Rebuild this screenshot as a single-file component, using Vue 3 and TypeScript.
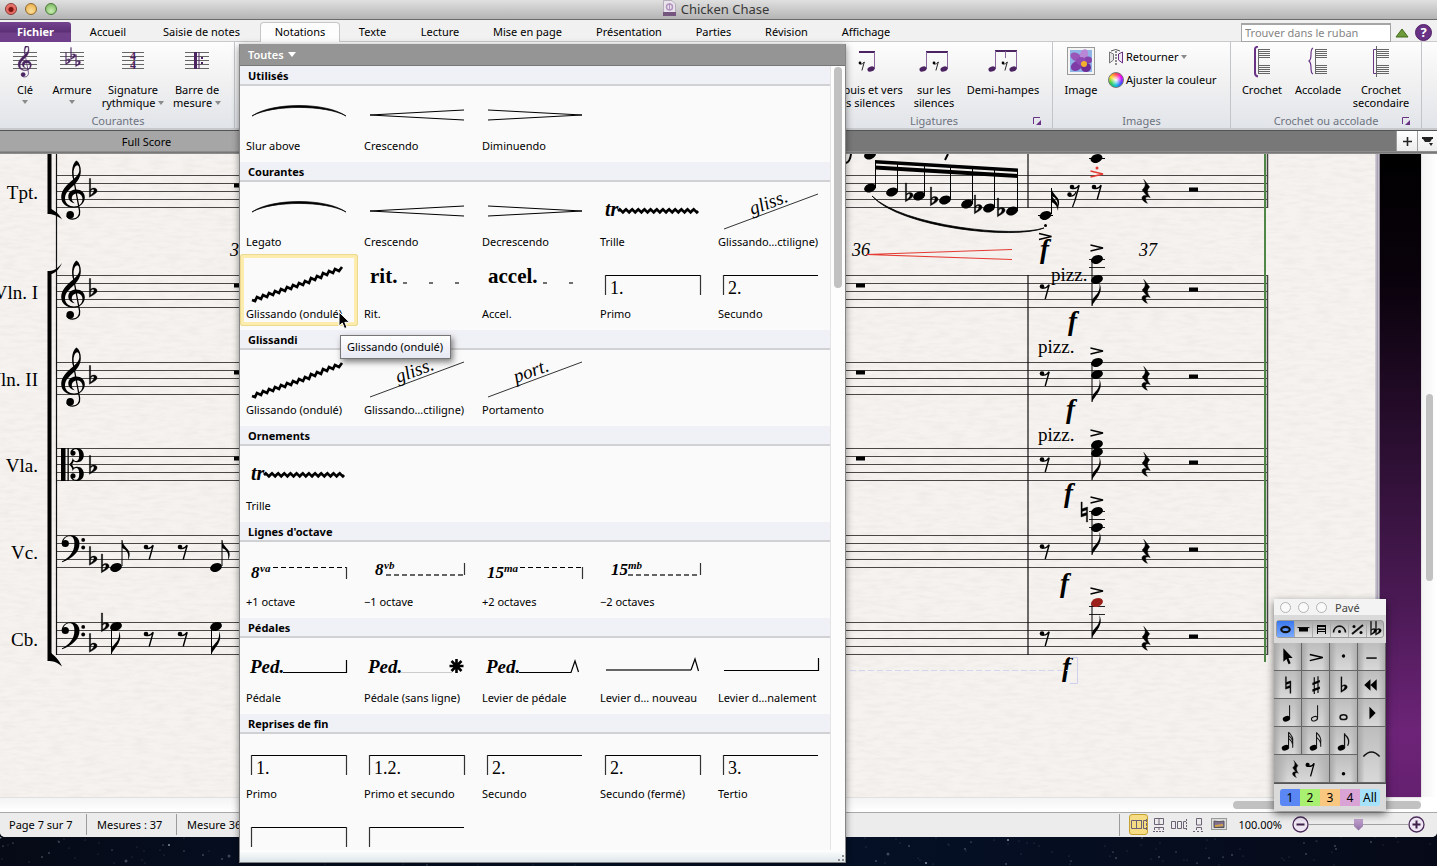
<script setup lang="ts">
import { ref } from 'vue'

interface Stroke { d: string; w?: number; c?: string; dash?: string; fill?: boolean }
interface Glyph { t: string; x: number; y: number; s: number; b?: boolean; i?: boolean; r?: number }
interface Item { label: string; strokes: Stroke[]; glyphs: Glyph[]; on?: boolean }
interface Section { title: string; items: Item[] }

function wave(x: number, y: number, length: number): string {
  let d = `M${x},${y}`
  const count = Math.round(length / 6)
  const step = length / count
  for (let k = 0; k < count; k++) {
    const left = x + k * step
    d += ` L${(left + step * 0.3).toFixed(1)},${y - 1.6} L${(left + step * 0.8).toFixed(1)},${y + 1.4} L${(left + step).toFixed(1)},${y}`
  }
  return d
}

const slur = (label: string): Item => ({
  label, glyphs: [],
  strokes: [{ d: 'M12,30 C32,16 86,16 106,30 C86,18.6 32,18.6 12,30Z', w: 0.7, fill: true }],
})
const cresc = (label: string): Item => ({ label, glyphs: [], strokes: [{ d: 'M106,24 L12,29 L106,34', w: 1 }] })
const dim = (label: string): Item => ({ label, glyphs: [], strokes: [{ d: 'M12,24 L106,29 L12,34', w: 1 }] })
const trill = (): Item => ({
  label: 'Trille',
  strokes: [{ d: wave(24, 29, 80), w: 2.7 }],
  glyphs: [{ t: 'tr', x: 11, y: 34, s: 20, b: true, i: true }],
})
const glissWave = (on = false): Item => ({
  label: 'Glissando (ondulé)', on, glyphs: [],
  strokes: [{ d: 'M12,46 L15,47 L17,43 L21,45 L23,41 L27,43 L29,39 L33,41 L35,37 L39,39 L41,35 L45,37 L47,33 L51,35 L53,31 L57,33 L59,29 L63,31 L65,27 L69,29 L71,24 L75,26 L77,22 L81,24 L83,19 L87,21 L89,17 L93,19 L95,15 L99,17 L102,13', w: 2.7 }],
})
const glissLine = (text: string, label: string): Item => ({
  label,
  strokes: [{ d: 'M12,47 L106,12', w: 1, c: '#333' }],
  glyphs: [{ t: text, x: 40, y: 33, s: 19, i: true, r: -20 }],
})
const volta = (label: string, text: string, closed: boolean): Item => ({
  label,
  strokes: [
    { d: 'M11,21.5 H106', w: 1 },
    { d: closed ? 'M11.5,21 V41 M106.5,21 V41' : 'M11.5,21 V41', w: 1.2, c: '#333' },
  ],
  glyphs: text ? [{ t: text, x: 16, y: 40, s: 18 }] : [],
})
const tempo = (label: string, text: string, dashes: number[]): Item => ({
  label,
  strokes: dashes.map((x) => ({ d: `M${x},29 h4`, w: 1.4, c: '#333' })),
  glyphs: [{ t: text, x: 12, y: 29, s: 21, b: true }],
})
const ottava = (label: string, num: string, sup: string, x: number, line: number, up: boolean): Item => {
  const base = up ? 36 : 33
  return {
    label,
    strokes: up
      ? [{ d: `M${line},25.5 H106`, w: 1.2, dash: '5 3' }, { d: 'M106.5,25 V37', w: 1.2, c: '#333' }]
      : [{ d: `M${line},33 H106`, w: 1.4, dash: '5 3', c: '#333' }, { d: 'M106.5,21 V33', w: 1.2, c: '#333' }],
    glyphs: [
      { t: num, x, y: base, s: 17, b: true, i: true },
      { t: sup, x: x + (num.length > 1 ? 17 : 9), y: base - 6, s: 11, b: true, i: true },
    ],
  }
}
const ped: Glyph = { t: 'Ped.', x: 10, y: 35, s: 19, b: true, i: true }
const asterisk = 'M98.5,21 V35 M91.5,28 H105.5 M93.5,23 L103.5,33 M103.5,23 L93.5,33'

const sections: Section[] = [
  { title: 'Utilisés', items: [slur('Slur above'), cresc('Crescendo'), dim('Diminuendo')] },
  {
    title: 'Courantes',
    items: [
      slur('Legato'), cresc('Crescendo'), dim('Decrescendo'), trill(), glissLine('gliss.', 'Glissando…ctiligne)'),
      glissWave(true), tempo('Rit.', 'rit.', [45, 71, 97]), tempo('Accel.', 'accel.', [67, 93]),
      volta('Primo', '1.', true), volta('Secundo', '2.', false),
    ],
  },
  { title: 'Glissandi', items: [glissWave(), glissLine('gliss.', 'Glissando…ctiligne)'), glissLine('port.', 'Portamento')] },
  { title: 'Ornements', items: [trill()] },
  {
    title: "Lignes d'octave",
    items: [
      ottava('+1 octave', '8', 'va', 11, 33, true), ottava('−1 octave', '8', 'vb', 17, 28, false),
      ottava('+2 octaves', '15', 'ma', 11, 44, true), ottava('−2 octaves', '15', 'mb', 17, 34, false),
    ],
  },
  {
    title: 'Pédales',
    items: [
      { label: 'Pédale', strokes: [{ d: 'M43,34.5 H106.5 V22', w: 1.2 }], glyphs: [ped] },
      { label: 'Pédale (sans ligne)', strokes: [{ d: 'M43,34.5 H94', w: 1, c: '#ccc' }, { d: asterisk, w: 2.6 }], glyphs: [ped] },
      { label: 'Levier de pédale', strokes: [{ d: 'M43,34.5 H95 L99,23 L102.5,34', w: 1.2 }], glyphs: [ped] },
      { label: 'Levier d… nouveau', strokes: [{ d: 'M12,32 H97', w: 1.4, c: '#333' }, { d: 'M97,32 L101,21 L104.5,33', w: 1.2 }], glyphs: [] },
      { label: 'Levier d…nalement', strokes: [{ d: 'M12,32.5 H106.5 V20', w: 1.2 }], glyphs: [] },
    ],
  },
  {
    title: 'Reprises de fin',
    items: [
      volta('Primo', '1.', true), volta('Primo et secundo', '1.2.', true), volta('Secundo', '2.', false),
      volta('Secundo (fermé)', '2.', true), volta('Tertio', '3.', false), volta('', '', true), volta('', '', false),
    ],
  },
]

const tabs = ['Fichier', 'Accueil', 'Saisie de notes', 'Notations', 'Texte', 'Lecture', 'Mise en page', 'Présentation', 'Parties', 'Révision', 'Affichage']

const staves = [175.5, 275.5, 362.5, 448.5, 535.5, 622.5]
const staffLines = staves.flatMap((top) => [0, 8, 16, 24, 32].map((o) => top + o))
const parts = [
  { name: 'Tpt.', y: 199 }, { name: 'Vln. I', y: 299 }, { name: 'Vln. II', y: 386 },
  { name: 'Vla.', y: 472 }, { name: 'Vc.', y: 559 }, { name: 'Cb.', y: 646 },
]
const run = [
  { x: 870, y: 188, flat: 0 }, { x: 892, y: 192, flat: 0 }, { x: 919, y: 196, flat: 906 },
  { x: 945, y: 200, flat: 931 }, { x: 967, y: 204, flat: 0 }, { x: 989, y: 208, flat: 975 },
  { x: 1012, y: 211, flat: 998 },
]
const chords = [
  { notes: [259.5, 279.5], ledgers: [259.5, 267.5], foot: 306, accent: 248 },
  { notes: [362.5, 374.5], ledgers: [], foot: 402, accent: 351 },
  { notes: [444.5, 452.5], ledgers: [], foot: 480, accent: 433 },
  { notes: [511.5, 527.5], ledgers: [511.5, 519.5, 527.5], foot: 555, accent: 500 },
  { notes: [602.5], ledgers: [606.5, 614.5], foot: 638, accent: 591, red: true },
]
const fortes = [[1040, 258], [1068, 330], [1066, 418], [1064, 502], [1060, 592], [1062, 676]]
const pizz = [[1051, 281], [1038, 353], [1038, 441]]

const stars = Array.from({ length: 190 }, (_, k) => ({
  x: (k * 761 + ((k * k * 13) % 97)) % 1437,
  y: (k * 17 + ((k * k * 7) % 23)) % 29,
  r: k % 19 === 0 ? 1.5 : k % 5 === 0 ? 1 : 0.6,
  o: k % 7 === 0 ? 0.7 : 0.3,
}))

const query = ref('')
const zoom = ref(50)
</script>

<template>
  <div class="desktop">
    <svg class="defs" width="0" height="0" aria-hidden="true">
      <defs>
        <g id="treble">
          <path d="M15.5,-39 C18.4,-37 20,-33 19.8,-28 C19.5,-22 16.5,-18 13,-14.6 C8,-10 4,-6.5 4,-1 C4,4 8.5,7 13,7 C18.5,7 21.5,3.5 21.5,-.5 C21.5,-4 19,-6 16,-6 C12.5,-6 10.8,-3.5 10.8,-1 C10.8,1 12,2.5 13.8,3.7 C10,3.2 7.3,.5 7.3,-3 C7.3,-7.5 11,-10 15,-10 C20.5,-10 23.8,-6.5 23.8,-2 C23.8,4 18.5,8.2 12.5,8.2 C5.5,8.2 .2,4 .2,-2.5 C.2,-9 5,-13.5 9.2,-17.5 C13,-21 18,-24.5 18.3,-28.8 C18.5,-32 17.7,-34.2 16.4,-34.2 C14,-34.2 12.6,-30 12.6,-26.5 L12.9,-22 L11.6,-22 C10.4,-29 11.4,-36 15.5,-39Z" />
          <path d="M12.2,-23 L18.6,11.5 C19.2,16.5 16,19.6 11.8,19.6 C8.5,19.6 6.3,18 5.8,16" fill="none" stroke="currentColor" stroke-width="1.3" />
          <circle cx="9.2" cy="15.2" r="3.8" />
        </g>
        <g id="bass">
          <path d="M.8,0 C.6,-5 5,-8.3 9.7,-8.3 C15,-8.3 18.5,-4.8 18.5,0 C18.5,9 11,15 1.2,18.8 L.8,17.9 C8,14 13.4,9 13.4,0 C13.4,-4.5 12,-7.2 8.5,-7.2 C5,-7.2 2.5,-4.5 2,-1Z" />
          <circle cx="4.3" cy="0" r="3.6" /><circle cx="22.2" cy="-3.6" r="1.9" /><circle cx="22.2" cy="4" r="1.9" />
        </g>
        <g id="alto">
          <path d="M0,-16.5 H4.5 V16.5 H0Z M6.5,-16.5 H7.8 V16.5 H6.5Z" />
          <path id="ear" d="M8,0 C10.5,-2 11.4,-4 11.6,-6.5 C12.5,-4.2 14,-3.2 15.5,-3.4 C17.4,-3.6 18.2,-6 18.2,-9 C18.2,-13 17.2,-15.3 14.8,-15.3 C13.2,-15.3 12.2,-14.6 12,-13.8 C14,-13.8 14.6,-12.4 14.6,-11.4 C14.6,-9.8 13.4,-8.8 12,-8.8 C10.2,-8.8 9.4,-10.2 9.4,-11.6 C9.4,-14.6 12.2,-16.5 15.6,-16.5 C20,-16.5 22.8,-13.4 22.8,-9.2 C22.8,-5 20,-2.2 16.4,-2.2 C15,-2.2 13.6,-2.5 12.8,-3.2 L11,0Z" />
          <use href="#ear" transform="scale(1,-1)" />
        </g>
        <g id="flat">
          <path d="M-.6,-13 H.6 V-2 C3,-4.4 7.4,-3.6 7,-.4 C6.6,2.4 2.6,3.6 -.6,5.8Z M.6,-.4 V3.6 C2.4,2.4 4,.8 4,-1 C4,-2.8 1.8,-2.4 .6,-.4Z" fill-rule="evenodd" stroke="currentColor" stroke-width=".4" />
        </g>
        <path id="natural" d="M0,-10 H1.2 V-3.2 L6.6,-5 V10 H5.4 V3.2 L0,5Z M1.2,-.6 V2 L5.4,.6 V-2Z" fill-rule="evenodd" stroke="currentColor" stroke-width=".4" />
        <path id="sharp" d="M1.4,-9 h1.2 v18 h-1.2z M5.4,-10 h1.2 v18 h-1.2z M0,-3 L8,-6 V-3.4 L0,-.4Z M0,4 L8,1 V3.6 L0,6.6Z" />
        <ellipse id="head" rx="6.1" ry="4.2" transform="rotate(-20)" />
        <g id="rest8">
          <circle r="2.3" /><path d="M0,1.4 C3.5,2.4 5.6,.6 7.2,-1.8 L3.2,12.5" fill="none" stroke="currentColor" stroke-width="1.4" />
        </g>
        <path id="rest4" d="M-2.2,-12 L3.6,-4.6 C.4,-1.4 1,1.6 4.2,6 C1.4,4.6 -.6,5.4 -.4,7.6 C-.3,9.4 .4,10.6 1.4,11.8 C-2.4,10.4 -5,7.4 -3.6,5.2 C-2.8,3.8 -.8,3.6 .8,4.2 L-3.8,-1.6 C-.4,-4.6 .2,-7.8 -2.2,-12Z" stroke="currentColor" stroke-width=".5" />
        <path id="flagDown" d="M0,0 V-5 C2,-11 9,-12 7.4,-23 C11.6,-13 5,-9 0,0Z" />
        <path id="flagUp" d="M0,0 C1,7 8.4,9 7.6,15 C7.4,17.4 7,18.6 6,20 C7.2,13 4.4,9.6 0,8Z" />
        <path id="accent" d="M-6.5,-3 L6,0 L-6.5,3" fill="none" stroke="currentColor" stroke-width="1.4" />
      </defs>
    </svg>

    <main class="window">
      <header class="titlebar">
        <div class="lights"><button class="light red" aria-label="Fermer"></button><button class="light yellow" aria-label="Réduire"></button><button class="light green" aria-label="Agrandir"></button></div>
        <h1><svg width="13" height="16" viewBox="0 0 13 16"><path d="M.5,.5 H9 L12.5,4 V15.5 H.5Z" fill="#e9e4ec" stroke="#b5adb9" /><circle cx="6.5" cy="7" r="3" fill="none" stroke="#b293c0" stroke-width="1.5" /><path d="M6.5,3 V10" stroke="#b293c0" /><rect y="12" width="13" height="4" fill="#75567f" /></svg>Chicken Chase</h1>
      </header>

      <nav class="tabs">
        <button v-for="t in tabs" :key="t" class="tab" :class="{ file: t === 'Fichier', current: t === 'Notations' }">{{ t }}</button>
        <span></span>
        <div class="finder">
          <input v-model="query" type="text" placeholder="Trouver dans le ruban" aria-label="Trouver dans le ruban" />
          <button class="plain" aria-label="Réduire le ruban"><svg width="14" height="10"><path d="M7,1 L13,9 H1Z" fill="#6f9a3a" stroke="#3f6a1a" /></svg></button>
          <button class="plain" aria-label="Aide"><svg width="17" height="17"><circle cx="8.500" cy="8.500" r="8" fill="#6a3285" stroke="#512069" /><text x="8.500" y="13" text-anchor="middle" class="helpmark">?</text></svg></button>
        </div>
      </nav>

      <section class="ribbon">
        <div class="group common">
          <div class="tools">
            <button class="tool w46"><svg width="26" height="36"><path d="M1,6.500 H25 M1,10.500 H25 M1,14.500 H25 M1,18.500 H25 M1,22.500 H25" class="rule" /><use href="#treble" class="ink heavy" transform="translate(6,20) scale(.56)" /></svg><span>Clé</span><i class="arrow"></i></button>
            <button class="tool w48"><svg width="26" height="36"><path d="M1,6.500 H25 M1,10.500 H25 M1,14.500 H25 M1,18.500 H25 M1,22.500 H25" class="rule" /><g class="ink heavy"><use href="#flat" transform="translate(7,15) scale(.65)" /><use href="#flat" transform="translate(12,10) scale(.65)" /><use href="#flat" transform="translate(17,17) scale(.65)" /></g></svg><span>Armure</span><i class="arrow"></i></button>
            <button class="tool w74"><svg width="26" height="36"><path d="M2,6.500 H24 M2,10.500 H24 M2,14.500 H24 M2,18.500 H24 M2,22.500 H24" class="rule" /><text x="13" y="14" text-anchor="middle" class="meter">4</text><text x="13" y="23" text-anchor="middle" class="meter">4</text></svg><span>Signature<br />rythmique <i class="arrow inline"></i></span></button>
            <button class="tool w54"><svg width="26" height="36"><path d="M1,6.500 H25 M1,10.500 H25 M1,14.500 H25 M1,18.500 H25 M1,22.500 H25" class="rule" /><path d="M10,6 h3 v17 h-3z M14.500,6 h1 v17 h-1z M17,11 h2 v2 h-2z M17,16 h2 v2 h-2z" class="ink" /></svg><span>Barre de<br />mesure <i class="arrow inline"></i></span></button>
          </div>
          <footer>Courantes</footer>
        </div>
        <div></div>
        <div class="group beams">
          <div class="tools">
            <button class="tool w68"><svg width="36" height="36"><path d="M11,5 H27 V7 H11Z" class="ink" /><path d="M26.500,6 V23" class="stem" /><use href="#head" class="ink" transform="translate(23,23) scale(.6)" /><use href="#rest8" transform="translate(12,17) scale(.6)" /></svg><span>Depuis et vers<br />les silences</span></button>
            <button class="tool w68"><svg width="36" height="36"><path d="M10,5 H32 V7 H10Z" class="ink" /><path d="M10.500,6 V23 M31.500,6 V23" class="stem" /><use href="#head" class="ink" transform="translate(7,23) scale(.6)" /><use href="#head" class="ink" transform="translate(28,23) scale(.6)" /><use href="#rest8" transform="translate(18,17) scale(.6)" /></svg><span>sur les<br />silences</span></button>
            <button class="tool w70"><svg width="36" height="36"><path d="M10,4 H32 V6 H10Z" class="ink" /><path d="M10.500,5 V23 M31.500,5 V23 M20.500,5 V12" class="stem" /><use href="#head" class="ink" transform="translate(7,23) scale(.6)" /><use href="#head" class="ink" transform="translate(28,23) scale(.6)" /><use href="#rest8" transform="translate(18,17) scale(.6)" /></svg><span>Demi-hampes</span></button>
          </div>
          <footer>Ligatures<button class="launcher" aria-label="Options de ligatures"><svg width="8" height="8"><path d="M.5,7 V.5 H7" fill="none" stroke="#6a3285" /><path d="M8,3 V8 H3Z" fill="#6a3285" /></svg></button></footer>
        </div>
        <div class="group images">
          <div class="tools">
            <button class="tool w56"><svg width="28" height="36"><rect x=".5" y="1.500" width="27" height="27" fill="#f4f4f4" stroke="#9a9a9a" /><rect x="3" y="4" width="22" height="22" fill="#8fb4e6" /><g fill="#9a55b8"><ellipse cx="9" cy="11" rx="6" ry="4" transform="rotate(30 9 11)" /><ellipse cx="17" cy="8.500" rx="4" ry="5.500" transform="rotate(20 17 8.500)" fill="#b887d6" /><ellipse cx="21" cy="14" rx="4" ry="3.500" fill="#8741ab" /><ellipse cx="9.500" cy="20" rx="6" ry="4.500" transform="rotate(-30 9.500 20)" fill="#7f3ca6" /><ellipse cx="19" cy="21.500" rx="5" ry="4.500" fill="#6d2b95" /><ellipse cx="14" cy="15" rx="5" ry="4" fill="#8f4bb3" /></g><circle cx="17" cy="18" r="3" fill="#f3b02c" /></svg><span>Image</span></button>
            <div class="stack">
              <button class="row"><svg width="16" height="16"><path d="M1.500,3 L5.500,5 V11 L1.500,14Z" fill="#e3e3e3" stroke="#777" /><path d="M14.500,3 L10.500,5 V11 L14.500,14Z" fill="#f1e8f5" stroke="#6a3285" /><path d="M8,2 V16" stroke="#222" stroke-dasharray="2 1" /><path d="M3,2 Q8,-1 12,2" fill="none" stroke="#555" /></svg><span>Retourner</span><i class="arrow"></i></button>
              <button class="row"><i class="wheel"></i><span>Ajuster la couleur</span></button>
            </div>
          </div>
          <footer>Images</footer>
        </div>
        <div class="group brackets">
          <div class="tools">
            <button class="tool w62"><svg width="20" height="36"><path d="M6,3.500 H18 M6,5.500 H18 M6,7.500 H18 M6,9.500 H18 M6,11.500 H18 M6,19.500 H18 M6,21.500 H18 M6,23.500 H18 M6,25.500 H18 M6,27.500 H18 M6.500,3 V28" class="rule" /><path d="M6,.500 Q3,1 3,3 V27 Q3,30 6,30.500" fill="none" stroke="#6a3285" stroke-width="2" /></svg><span>Crochet</span></button>
            <button class="tool w50"><svg width="20" height="36"><path d="M8,3.500 H19 M8,5.500 H19 M8,7.500 H19 M8,9.500 H19 M8,11.500 H19 M8,19.500 H19 M8,21.500 H19 M8,23.500 H19 M8,25.500 H19 M8,27.500 H19 M7.500,3 V28" class="rule" /><path d="M5,2 C1,4 5,12 1,15 C5,18 1,26 5,28" fill="none" stroke="#6a3285" stroke-width="1.200" /></svg><span>Accolade</span></button>
            <button class="tool w76"><svg width="20" height="36"><path d="M6,3.500 H18 M6,5.500 H18 M6,7.500 H18 M6,9.500 H18 M6,11.500 H18 M6,19.500 H18 M6,21.500 H18 M6,23.500 H18 M6,25.500 H18 M6,27.500 H18 M5.500,0 V31" class="rule" /><path d="M5,3.500 H2.500 V27.500 H5" fill="none" stroke="#6a3285" /></svg><span>Crochet<br />secondaire</span></button>
          </div>
          <footer>Crochet ou accolade<button class="launcher" aria-label="Options de crochets"><svg width="8" height="8"><path d="M.5,7 V.5 H7" fill="none" stroke="#6a3285" /><path d="M8,3 V8 H3Z" fill="#6a3285" /></svg></button></footer>
        </div>
        <div></div>
      </section>

      <div class="docbar">
        <button class="doc">Full Score</button>
        <span></span>
        <button class="docbtn" aria-label="Nouvel onglet"><svg width="9" height="9"><path d="M4.500,0 V9 M0,4.500 H9" stroke="#222" stroke-width="1.600" /></svg></button>
        <button class="docbtn" aria-label="Liste des onglets"><svg width="11" height="9"><path d="M0,0 H11 V2 H10 L8,5 H3 L1,2 H0Z M7,6 H11 L9,9Z" fill="#222" /></svg></button>
      </div>

      <div class="workspace">
        <div class="canvas">
          <svg class="paper">
            <defs>
              <filter id="grain" x="0" y="0" width="100%" height="100%">
                <feTurbulence type="fractalNoise" baseFrequency="0.06 0.28" numOctaves="3" seed="4" />
                <feColorMatrix values="0 0 0 0 .5  0 0 0 0 .42  0 0 0 0 .38  0 0 0 .7 -.27" />
              </filter>
            </defs>
            <rect width="100%" height="100%" fill="#f5f2ef" />
            <rect width="100%" height="100%" filter="url(#grain)" opacity=".3" />
            <g transform="translate(0,-154)">
              <path :d="staffLines.map((y) => `M56,${y} H1268`).join(' ')" stroke="#4a4846" fill="none" />
              <path d="M56.500,154 V655 M1028,154 V208 M1028,275 V655" stroke="#111" stroke-width="1.200" fill="none" />
              <path d="M1267.500,154 V208 M1267.500,275 V655" stroke="#444" stroke-width="1.500" />
              <path d="M1265,154 V662" stroke="#4f8748" stroke-width="2" />
              <path d="M47.500,154 H51.500 V209 C54,211 59,213 62,219.500 C57,215.500 53,214 47.500,214Z" />
              <path d="M47.500,277 V271 C53,271 57,269.500 62,263 C59,270 54,273.500 51.500,274 V653 C54,656 59,659 62,666.500 C57,662 53,661 47.500,661Z" />
              <text v-for="p in parts" :key="p.name" class="part" x="38" :y="p.y" text-anchor="end">{{ p.name }}</text>

              <use v-for="y in [199.5, 299.5, 386.5]" :key="y" href="#treble" x="61" :y="y" />
              <use href="#alto" x="61" y="464.500" />
              <use href="#bass" x="61" y="543.500" /><use href="#bass" x="61" y="630.500" />
              <use v-for="y in [191.5, 291.5, 378.5, 468.5, 559.5, 646.5]" :key="'k' + y" href="#flat" x="90" :y="y" />

              <g v-for="x in [116, 216]" :key="x">
                <use href="#head" :x="x" y="567.500" /><path :d="`M${x + 6},566 V540`" stroke="#000" /><use href="#flagUp" :x="x + 6" y="540" />
                <use href="#head" :x="x" y="626.500" /><path :d="`M${x - 4.5},627 V654`" stroke="#000" /><use href="#flagDown" :x="x - 4.5" y="654" />
              </g>
              <use href="#flat" x="102" y="567" /><use href="#flat" x="102" y="626" />
              <use v-for="x in [146, 180]" :key="'r' + x" href="#rest8" :x="x" y="547" />
              <use v-for="x in [146, 180]" :key="'s' + x" href="#rest8" :x="x" y="634" />
              <rect v-for="y in staves.slice(0, 4)" :key="'w' + y" x="234" :y="y + 8" width="9" height="4" />
              <rect v-for="y in staves.slice(1, 4)" :key="'v' + y" x="856" :y="y + 8" width="9" height="4" />
              <rect v-for="y in staves" :key="'h' + y" x="1189" :y="y + 12" width="9" height="4" />
              <use v-for="y in staves" :key="'q' + y" href="#rest4" x="1146" :y="y + 16" />
              <use v-for="y in staves.slice(1)" :key="'e' + y" href="#rest8" x="1042" :y="y + 11" />

              <text class="barno" x="230" y="256">35</text><text class="barno" x="852" y="256">36</text><text class="barno" x="1139" y="256">37</text>

              <path d="M875,160 L1018,168.500 V172 L875,163.500Z M875,165.500 L1018,174 V178 L875,169.500Z" />
              <g v-for="(n, k) in run" :key="'n' + k">
                <use href="#head" :x="n.x" :y="n.y" /><path :d="`M${n.x + 5.5},${n.y} V${161 + k * 1.4}`" stroke="#000" />
                <use v-if="n.flat" href="#flat" :x="n.flat" :y="n.y" />
              </g>
              <path d="M872,196 C900,228 1014,240 1044,228 C1014,238 902,226 872,196Z" stroke="#000" stroke-width=".8" />
              <use href="#head" x="870" y="155" /><path d="M948,154 L945,160 M846,163 Q850,162 851,154" stroke="#000" stroke-width="2" fill="none" />
              <use href="#head" x="1045.500" y="215.500" /><path d="M1038,215.500 H1053 M1051.500,214 V188" stroke="#000" />
              <use href="#flagUp" x="1051.500" y="188" /><path d="M1051.500,194 C1053,201 1060,201 1058,211 C1057,205 1054,203 1051.500,202Z" />
              <circle cx="1045.500" cy="225.500" r="1.500" /><use href="#accent" x="1045.500" y="236.500" />
              <use href="#rest8" x="1072" y="187" /><circle cx="1069.500" cy="194.500" r="2.200" /><path d="M1069,196 Q1074,197 1076,192 M1075.500,199 L1072.500,207" stroke="#000" stroke-width="1.200" fill="none" />
              <use href="#head" x="1096.500" y="158.500" /><path d="M1089,158.500 H1105" stroke="#000" />
              <g class="redmark"><circle cx="1097" cy="168" r="1.500" /><use href="#accent" x="1097" y="174" /></g>
              <use href="#rest8" x="1094" y="187" />
              <path d="M1012,249.500 L866,254.500 L1012,259.500" fill="none" stroke="#e43a32" stroke-width="1.200" />

              <g v-for="(c, k) in chords" :key="'c' + k">
                <path v-for="l in c.ledgers" :key="l" :d="`M1089,${l} H1105`" stroke="#222" />
                <path :d="`M1092,${c.notes[0]} V${c.foot}`" stroke="#000" />
                <use v-for="n in c.notes" :key="n" href="#head" x="1097" :y="n" :class="{ wrong: c.red }" />
                <use href="#flagDown" x="1092" :y="c.foot" /><use href="#accent" x="1097" :y="c.accent" />
              </g>
              <use href="#natural" x="1081" y="512" />
              <text v-for="f in fortes" :key="f[1]" class="forte" :x="f[0]" :y="f[1]">f</text>
              <text v-for="p in pizz" :key="p[1]" class="part" :x="p[0]" :y="p[1]">pizz.</text>
              <path d="M850,670.500 H1068" stroke="#d5d6ee" stroke-dasharray="6 3" /><path d="M1070,683.500 H1077.500 V657.500 H1070" stroke="#cfd0ec" fill="none" />
            </g>
          </svg>
          <div class="edge"></div>
          <div class="backdrop"></div>
        </div>
        <div class="vscroll"><i></i></div>
        <div class="hscroll"><i></i></div>
        <div class="corner"></div>
      </div>

      <footer class="status">
        <span class="info">Page 7 sur 7</span><span class="info">Mesures : 37</span><span class="info">Mesure 36</span>
        <span class="spacer"></span>
        <div class="views">
          <button class="view on" aria-label="Panorama"><svg width="16" height="12"><path d="M.5,1.500 H11 M.5,9.500 H11 M.5,1.500 V9.500 M5.500,1.500 V9.500 M10.500,1.500 V9.500 M15,1.500 H12.500 V9.500 H15" class="v" /><path d="M15.500,0 V12" class="v" stroke-dasharray="3 1" /></svg></button>
          <button class="view" aria-label="Pages empilées"><svg width="12" height="14"><path d="M1.500,.5 H10.500 V6.500 H1.500Z M6,.5 V6.500 M1.500,12 V9.500 H10.500 V12 M6,9.500 V12" class="v" /><path d="M0,13.500 H12" class="v" stroke-dasharray="2 1" /></svg></button>
          <button class="view" aria-label="Pages en ligne"><svg width="16" height="12"><path d="M.5,2.500 H4.500 V9.500 H.5Z M6.500,2.500 H10.500 V9.500 H6.500Z M15,2.500 H12.500 V9.500 H15" class="v" /><path d="M15.500,0 V12" class="v" stroke-dasharray="2 1" /></svg></button>
          <button class="view" aria-label="Page seule"><svg width="12" height="14"><path d="M3.500,.5 H8.500 V7 H3.500Z M3.500,12 V9.500 H8.500 V12" class="v" /><path d="M0,13.500 H12" class="v" stroke-dasharray="2 2" /></svg></button>
          <button class="view" aria-label="Plein écran"><svg width="16" height="13"><rect x=".5" y=".5" width="15" height="11" fill="#ddd" stroke="#999" /><path d="M3,3 Q8,4.500 13,3 V9.500 H3Z" fill="#7f6d92" stroke="#555" /><path d="M4,8 L12,7" stroke="#d3a24c" stroke-width="2" /></svg></button>
        </div>
        <label class="zoomlabel" for="zoom">100.00%</label>
        <button class="round" aria-label="Zoom arrière"><svg width="17" height="17"><circle cx="8.500" cy="8.500" r="7.500" fill="#efe6f3" stroke="#4b2c5c" stroke-width="1.300" /><path d="M4.500,8.500 H12.500" stroke="#3d2149" stroke-width="2" /></svg></button>
        <input id="zoom" v-model="zoom" class="zoom" type="range" min="0" max="100" />
        <button class="round" aria-label="Zoom avant"><svg width="17" height="17"><circle cx="8.500" cy="8.500" r="7.500" fill="#efe6f3" stroke="#4b2c5c" stroke-width="1.300" /><path d="M4.500,8.500 H12.500 M8.500,4.500 V12.500" stroke="#3d2149" stroke-width="2" /></svg></button>
      </footer>
    </main>

    <svg class="sky" width="100%" height="29" aria-hidden="true"><circle v-for="(s, k) in stars" :key="k" :cx="s.x" :cy="s.y" :r="s.r" :opacity="s.o" fill="#b9cde0" /></svg>

    <aside class="gallery">
      <button class="filter">Toutes <i></i></button>
      <div class="body">
        <div class="list">
          <section v-for="s in sections" :key="s.title" class="section">
            <h2>{{ s.title }}</h2>
            <div class="items">
              <button v-for="(item, k) in s.items" :key="k" class="item" :class="{ on: item.on }">
                <svg width="118" height="52">
                  <path v-for="(p, n) in item.strokes" :key="n" :d="p.d" :fill="p.fill ? '#000' : 'none'" :stroke="p.c || '#000'" :stroke-width="p.w" :stroke-dasharray="p.dash" />
                  <text v-for="(g, n) in item.glyphs" :key="n" :x="g.x" :y="g.y" :font-size="g.s" :font-weight="g.b ? 700 : 400" :font-style="g.i ? 'italic' : 'normal'" :transform="g.r ? `rotate(${g.r} ${g.x} ${g.y})` : undefined">{{ g.t }}</text>
                </svg>
                <span>{{ item.label }}</span>
              </button>
            </div>
          </section>
        </div>
        <div class="track"><i></i></div>
      </div>
      <div class="grip"><svg width="8" height="8"><path d="M5,1 h2 v2 h-2z M5,5 h2 v2 h-2z M1,5 h2 v2 h-2z" fill="#8c8c8c" /></svg></div>
    </aside>

    <div class="tooltip" role="tooltip">Glissando (ondulé)</div>
    <svg class="pointer" width="13" height="19"><path d="M1,1 V15 L4.300,12 L6.500,17.500 L9,16.500 L6.800,11.300 H11.500Z" fill="#000" stroke="#fff" /></svg>

    <aside class="keypad">
      <header><i></i><i></i><i></i><span>Pavé</span></header>
      <div class="pages">
        <button class="on" aria-label="Notes"><svg width="17" height="17"><ellipse cx="8.500" cy="8.500" rx="4.200" ry="2.600" fill="none" stroke="#111" stroke-width="2.200" /></svg></button>
        <button aria-label="Silences"><svg width="17" height="17"><path d="M2.500,6.500 H14.500" stroke="#111" /><rect x="4" y="7" width="9" height="3.500" /></svg></button>
        <button aria-label="Ligatures"><svg width="17" height="17"><path d="M4,4 H13 V13 H12 V11 H5 V13 H4Z M5,6 V7.500 H12 V6Z M5,9 V10 H12 V9Z" fill-rule="evenodd" /></svg></button>
        <button aria-label="Articulations"><svg width="17" height="17"><path d="M2.500,11.500 C3,3 14,3 14.500,11.500" fill="none" stroke="#111" stroke-width="1.600" /><circle cx="8.500" cy="10.500" r="1.500" /></svg></button>
        <button aria-label="Jazz"><svg width="17" height="17"><path d="M3,13 L14,4" stroke="#111" stroke-width="2" /><circle cx="5" cy="5.500" r="1.500" /><circle cx="12" cy="11.500" r="1.500" /></svg></button>
        <button aria-label="Altérations"><svg width="17" height="17"><use href="#flat" transform="translate(4,10) scale(.75)" /><use href="#flat" transform="translate(9,10) scale(.75)" /></svg></button>
      </div>
      <div class="keys">
        <button aria-label="Sélection"><svg viewBox="0 0 26 26"><path d="M9,5 V18 L12,15.500 L14,20.500 L16,19.500 L14,14.500 H18Z" /></svg></button>
        <button aria-label="Accent"><svg viewBox="0 0 26 26"><use href="#accent" x="14" y="14" /></svg></button>
        <button aria-label="Staccato"><svg viewBox="0 0 26 26"><circle cx="13" cy="12.500" r="1.600" /></svg></button>
        <button aria-label="Tenuto"><svg viewBox="0 0 26 26"><path d="M8,14.500 H18" stroke="#111" stroke-width="1.500" /></svg></button>
        <button aria-label="Bécarre"><svg viewBox="0 0 26 26"><use href="#natural" transform="translate(11,13.500) scale(.8)" /></svg></button>
        <button aria-label="Dièse"><svg viewBox="0 0 26 26"><use href="#sharp" transform="translate(10,14) scale(.9)" /></svg></button>
        <button aria-label="Bémol"><svg viewBox="0 0 26 26"><use href="#flat" transform="translate(11,16) scale(.8)" /></svg></button>
        <button aria-label="Retour"><svg viewBox="0 0 26 26"><path d="M6,13.500 L12,8 V19Z M12,13.500 L18,8 V19Z" /></svg></button>
        <button aria-label="Noire"><svg viewBox="0 0 26 26"><use href="#head" transform="translate(12,19) scale(.6)" /><path d="M15,19 V6" stroke="#111" /></svg></button>
        <button aria-label="Blanche"><svg viewBox="0 0 26 26"><ellipse cx="12" cy="19" rx="3" ry="2" fill="none" stroke="#111" transform="rotate(-20 12 19)" /><path d="M15,18.500 V6" stroke="#111" /></svg></button>
        <button aria-label="Ronde"><svg viewBox="0 0 26 26"><ellipse cx="13" cy="17.500" rx="3.300" ry="2.300" fill="none" stroke="#111" stroke-width="1.500" /></svg></button>
        <button aria-label="Lecture"><svg viewBox="0 0 26 26"><path d="M11,7.500 L17,13.500 L11,19.500Z" /></svg></button>
        <button aria-label="Triple croche"><svg viewBox="0 0 26 26"><use href="#head" transform="translate(11,20) scale(.6)" /><path d="M14,20 V5 M14,5 Q19,10 18,14 M14,8 Q19,12 18,17 M14,11 Q19,15 18,20" fill="none" stroke="#111" /></svg></button>
        <button aria-label="Double croche"><svg viewBox="0 0 26 26"><use href="#head" transform="translate(11,20) scale(.6)" /><path d="M14,20 V5 M14,5.500 Q19,10 18,15 M14,10 Q19,14 18,19" fill="none" stroke="#111" /></svg></button>
        <button aria-label="Croche"><svg viewBox="0 0 26 26"><use href="#head" transform="translate(11,20) scale(.6)" /><path d="M14,20 V6 M14,7 Q20,12 17,18" fill="none" stroke="#111" stroke-width="1.200" /></svg></button>
        <button class="tall" aria-label="Liaison"><svg viewBox="0 0 26 54"><path d="M5,29 Q13,20 21,29" fill="none" stroke="#111" stroke-width="1.500" /></svg></button>
        <button class="wide" aria-label="Silence"><svg viewBox="0 0 54 26"><use href="#rest4" transform="translate(21,13.500) scale(.7)" /><use href="#rest8" transform="translate(33,9.500) scale(.9)" /></svg></button>
        <button aria-label="Point"><svg viewBox="0 0 26 26"><circle cx="13" cy="18" r="1.700" /></svg></button>
      </div>
      <div class="voices"><button class="v1">1</button><button class="v2">2</button><button class="v3">3</button><button class="v4">4</button><button class="v5">All</button></div>
    </aside>
  </div>
</template>

<style>
body { margin: 0; overflow: hidden; }
</style>

<style scoped>
* { box-sizing: border-box; }
.desktop { position: relative; display: flex; flex-direction: column; height: 100vh; overflow: hidden; background: linear-gradient(90deg, #060a16, #04132c 40%, #060a18); font: 11px/13px "Noto Sans", "Open Sans", sans-serif; color: #000; }
.defs { position: absolute; }
button { margin: 0; padding: 0; border: 0; background: none; font: inherit; color: inherit; }
svg { display: block; flex: none; }
h1, h2 { margin: 0; }
.window { flex: 1; min-height: 0; display: flex; flex-direction: column; background: #ececec; border-radius: 0 0 5px 5px; overflow: hidden; }
.sky { flex: none; }

.titlebar { display: grid; grid-template-columns: 1fr auto 1fr; height: 20px; align-items: start; background: linear-gradient(#e0e0e0, #b4b4b4); border-bottom: 1px solid #6b6b6b; }
.lights { display: flex; gap: 8px; padding: 3px 0 0 5px; }
.light { width: 12px; height: 12px; border-radius: 50%; border: 1px solid #6d5b4c; }
.red.light { background: radial-gradient(circle at 50% 55%, #7c1512 0 2px, #e2645c 3px, #f19a92); border-color: #8c3530; }
.yellow.light { background: radial-gradient(circle at 50% 70%, #fbdf9a, #e5a83e); border-color: #93672b; }
.green.light { background: radial-gradient(circle at 50% 70%, #c8eeb2, #71b054); border-color: #4b7a39; }
h1 { display: flex; gap: 5px; padding-right: 5px; font-size: 13px; line-height: 18px; font-weight: 400; color: #383838; }

.tabs { display: grid; grid-template-columns: 71px 74px 113px 83px 63px 72px 103px 100px 69px 77px 82px 1fr auto; height: 22px; padding-top: 2px; background: #f1f1f1; border-bottom: 1px solid #c9c9c9; }
.tab { padding-bottom: 3px; }
.tab.file { background: linear-gradient(#74448e, #5c2f76 48%, #70408a 52%, #6f3f8c); color: #fff; font-weight: 700; border-radius: 0 3px 0 0; }
.tab.current { height: 21px; margin: 0 1px 0 2px; background: #fdfdfd; border: 1px solid #c6c6c6; border-bottom: 0; border-radius: 4px 4px 0 0; }
.finder { display: flex; align-items: center; gap: 4px; padding-right: 5px; }
.finder input { width: 150px; height: 19px; margin: 0; padding: 0 3px 2px; border: 1px solid #a5a5a5; border-width: 2px 1px 1px; background: #fff; font: inherit; }
.finder input::placeholder { color: #858585; }
.finder .plain:last-child { margin-left: 2px; }
.helpmark { font: 700 13px "Noto Sans", sans-serif; fill: #fff; }

.ribbon { display: grid; grid-template-columns: 235px 1fr 237px 178px 191px 15px; height: 88px; background: linear-gradient(#fdfdfd, #f0f0f1 50%, #e1e4e9); border-bottom: 2px solid #c6c8cc; }
.group { display: flex; flex-direction: column; min-width: 0; border-right: 1px solid #c1c4c8; }
.tools { flex: 1; display: flex; padding-top: 4px; }
.tool { display: flex; flex-direction: column; align-items: center; flex: none; white-space: nowrap; text-align: center; }
.tool span { margin-top: 1px; }
.w46 { width: 46px; } .w48 { width: 48px; } .w50 { width: 50px; } .w54 { width: 54px; } .w56 { width: 56px; } .w62 { width: 62px; } .w68 { width: 68px; } .w70 { width: 70px; } .w74 { width: 74px; } .w76 { width: 76px; }
.group.common { padding-left: 2px; }
.group.beams .tools { padding-left: 16px; }
.group footer { display: flex; justify-content: center; align-items: center; position: relative; height: 15px; color: #6d7380; }
.launcher { position: absolute; right: 11px; top: 4px; }
.arrow { display: block; width: 0; height: 0; border: 3px solid transparent; border-top: 4px solid #8a8a8a; border-bottom: 0; margin-top: 4px; }
.arrow.inline { display: inline-block; margin: 0 0 2px; }
.row .arrow { margin: 0; }
.rule { stroke: #666; fill: none; }
.ink { fill: #4a2360; color: #4a2360; }
.heavy { stroke: #4a2360; stroke-width: .6px; }
.stem { stroke: #8a659c; fill: none; }
.meter { font: 700 12px "Liberation Serif", serif; fill: #4a2360; }
.stack { display: flex; flex-direction: column; gap: 6px; padding-top: 2px; }
.row { display: flex; align-items: center; gap: 2px; height: 17px; text-align: left; }
.group.images .stack { margin-left: -1px; }
.wheel { width: 16px; height: 16px; border: 1px solid #777; border-radius: 50%; background: radial-gradient(#fff, transparent 60%), conic-gradient(#f44, #e0f, #44f, #0bd, #3c4, #fd2, #f44); }

.docbar { display: grid; grid-template-columns: 293px 1fr 21px 20px; height: 24px; background: #787878; border-top: 1px solid #555; border-bottom: 3px double #8d8d8d; }
.doc { background: #a6a6a6; }
.docbtn { display: grid; place-items: center; background: linear-gradient(#fff, #ececec); border-left: 1px solid #9b9b9b; }

.workspace { flex: 1; min-height: 0; display: grid; grid-template-columns: 1fr 16px; grid-template-rows: 1fr 15px; background: #fff; }
.canvas { display: flex; min-height: 0; overflow: hidden; }
.paper { flex: 1 1 0; width: 0; height: 100%; color: #000; }
.edge { width: 5px; background: linear-gradient(90deg, #d9d5dc, #a9a3b5 50%, #e4deea 60%, #6d6475); }
.backdrop { width: 41px; background: linear-gradient(#000, #0a020c 20%, #4b1a55 70%, #6d2478 90%, #65206f); }
.vscroll { background: linear-gradient(90deg, #f3f3f3, #fff); border-left: 1px solid #e2e2e2; padding: 240px 4px 0; }
.vscroll i { display: block; height: 187px; border-radius: 4px; background: #c1c1c1; }
.hscroll { display: flex; justify-content: flex-end; align-items: center; background: linear-gradient(#f4f4f4, #fff); border-top: 1px solid #e0e0e0; }
.hscroll i { width: 188px; height: 8px; border-radius: 4px; background: #c1c1c1; }
.part { font: 19px "Liberation Serif", serif; }
.barno { font: italic 18px "Liberation Serif", serif; }
.forte { font: italic 700 27px "Liberation Serif", serif; }
.redmark { fill: #e43a32; color: #e43a32; }
.wrong { fill: #9b2019; }

.status { display: flex; align-items: center; height: 25px; padding-bottom: 1px; background: #ececec; border-top: 1px solid #a8a8a8; }
.info { height: 21px; line-height: 21px; margin-left: 9px; padding-right: 10px; border-right: 1px solid #9c9c9c; min-width: 78px; white-space: nowrap; }
.info + .info { margin-left: 10px; min-width: 80px; }
.spacer { flex: 1; }
.views { display: flex; align-items: center; gap: 1px; height: 22px; padding-left: 9px; border-left: 1px solid #9c9c9c; }
.view { display: grid; place-items: center; width: 19px; height: 21px; }
.view.on { background: #f6dc83; border: 1px solid #c4a02f; border-radius: 3px; }
.v { fill: none; stroke: #6e6276; }
.zoomlabel { margin: 0 10px; }
.zoom { appearance: none; width: 99px; height: 17px; margin: 0; background: linear-gradient(#a2a2a2, #a2a2a2) center / 100% 1px no-repeat; }
.zoom::-webkit-slider-thumb { appearance: none; width: 9px; height: 12px; background: linear-gradient(#c5a5d4, #8c6da0); clip-path: polygon(0 0, 100% 0, 100% 65%, 50% 100%, 0 65%); }
.round:last-child { margin-right: 12px; }

.gallery { position: absolute; left: 239px; top: 44px; bottom: 3px; width: 607px; display: flex; flex-direction: column; border: 1px solid #858585; border-top: 0; background: #fafafa; box-shadow: 0 2px 7px rgb(0 0 0 / 45%); }
.filter { display: flex; align-items: center; gap: 4px; height: 22px; flex: none; padding-left: 8px; background: #959595; border-bottom: 1px solid #777; color: #fff; font-weight: 600; }
.filter i { border: 4px solid transparent; border-top: 5px solid #fff; border-bottom: 0; }
.body { flex: 1; min-height: 0; display: grid; grid-template-columns: 1fr 15px; }
.list { min-height: 0; overflow: hidden; }
.section { padding-bottom: 4px; }
.section h2 { height: 20px; padding-left: 8px; font-size: 11px; line-height: 19px; font-weight: 700; background: #f0f1f6; border-bottom: 2px solid #cfd1d3; }
.items { display: grid; grid-template-columns: repeat(5, 118px); grid-auto-rows: 72px; }
.item { display: flex; flex-direction: column; align-items: flex-start; text-align: left; white-space: nowrap; }
.item text { font-family: "Liberation Serif", serif; }
.item span { padding-left: 6px; line-height: 16px; }
.item.on { border-radius: 3px; box-shadow: inset 0 0 0 1px #ead98f, inset 0 0 0 4px #fcedae; }
.track { background: #fdfdfd; border-left: 1px solid #e4e4e4; padding: 1px 3px 0; }
.track i { display: block; height: 221px; border-radius: 4px; background: #c1c1c1; }
.grip { display: flex; justify-content: flex-end; align-items: flex-end; flex: none; height: 12px; background: linear-gradient(#fff, #dde6ea); }

.tooltip { position: absolute; left: 340px; top: 335px; padding: 4px 7px 4px 6px; border: 1px solid #767676; background: linear-gradient(#fff, #e6e8f3); line-height: 14px; box-shadow: 2px 3px 6px rgb(0 0 0 / 50%); }
.pointer { position: absolute; left: 338px; top: 311px; }

.keypad { position: absolute; right: 51px; bottom: 55px; width: 112px; background: #dadada; box-shadow: 0 3px 8px rgb(0 0 0 / 55%); }
.keypad header { display: flex; align-items: center; gap: 7px; height: 16px; padding-left: 6px; background: #f3f3f3; color: #444; }
.keypad header i { width: 11px; height: 11px; border: 1px solid #b3b3b3; border-radius: 50%; background: #fafafa; }
.keypad header span { margin-left: 1px; }
.pages { display: flex; margin: 5px 2px 5px; height: 18px; background: linear-gradient(#aaa, #e3e3e3); border: 1px solid #9a9a9a; border-radius: 3px; }
.pages button { flex: 1; display: grid; place-items: center; border-right: 1px solid #aaa; }
.pages button.on { background: linear-gradient(#3b78ef, #79aaff); }
.pages button:last-child { border: 0; }
.keys { display: grid; grid-template-columns: repeat(4, 1fr); grid-auto-rows: 28px; background: #666; border-bottom: 1px solid #555; }
.keys button { display: flex; border: solid #666; border-width: 0 1px 1px 0; background: linear-gradient(90deg, #a8a8a8, transparent 25% 75%, #b0b0b0), linear-gradient(#bdbdbd, #d8d8d8); }
.keys svg { width: 100%; height: 100%; }
.keys .tall { grid-row: span 2; }
.keys .wide { grid-column: span 2; }
.voices { display: grid; grid-template-columns: repeat(5, 20px); justify-content: center; height: 27px; padding: 5px 0; }
.voices button { font-size: 12px; }
.v1 { background: #5a87f3; } .v2 { background: #a9f070; } .v3 { background: #f9c77f; } .v4 { background: #d9a3d6; } .v5 { background: #a6e3fb; }
.voices .v1 { border-radius: 3px 0 0 3px; }
.voices .v5 { border-radius: 0 3px 3px 0; }
</style>
